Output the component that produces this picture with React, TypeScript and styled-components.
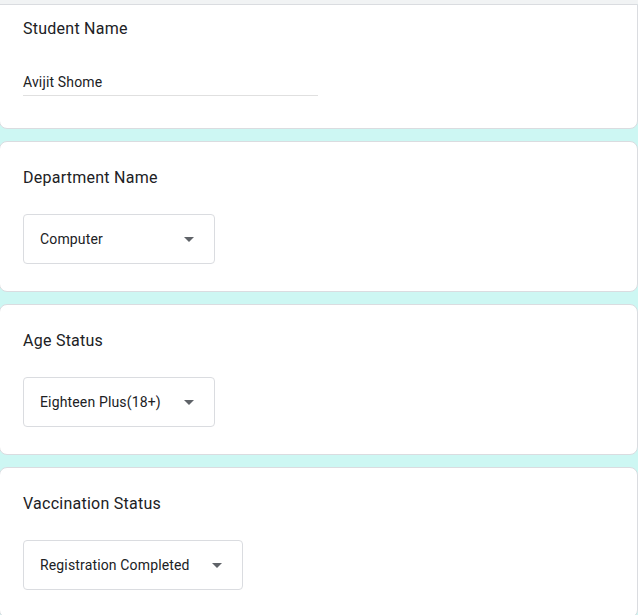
import React from "react";
import styled, { createGlobalStyle } from "styled-components";

const Global = createGlobalStyle`
  html, body { margin: 0; padding: 0; }
  body {
    background: #cdf7f3;
    font-family: Roboto, "Liberation Sans", Arial, sans-serif;
    color: #202124;
    overflow: hidden;
  }
`;

const Page = styled.div`
  width: 638px;
  min-height: 615px;
  background: #cdf7f3;
`;

const TopStrip = styled.div`
  height: 4px;
  background: #f1f3f4;
`;

const List = styled.div`
  display: flex;
  flex-direction: column;
  gap: 12px;
  margin-left: -1px;
`;

const Card = styled.section<{ $first?: boolean }>`
  box-sizing: border-box;
  width: 639px;
  background: #ffffff;
  border: 1px solid #dadce0;
  border-radius: ${(p) => (p.$first ? "0 0 8px 8px" : "8px")};
  padding: ${(p) => (p.$first ? "12px 24px 32px 23px" : "24px 24px 27px 23px")};
  display: flex;
  flex-direction: column;
  align-items: flex-start;
  gap: ${(p) => (p.$first ? "31px" : "24px")};
`;

const Title = styled.div`
  font-size: 16px;
  line-height: 24px;
  letter-spacing: 0.25px;
  color: #202124;
`;

const TextAnswer = styled.div`
  box-sizing: border-box;
  width: 295px;
  font-size: 14px;
  line-height: 20px;
  letter-spacing: 0.15px;
  padding-bottom: 3px;
  border-bottom: 1px solid #e0e0e0;
  color: #202124;
`;

const Select = styled.div`
  box-sizing: border-box;
  height: 50px;
  display: flex;
  align-items: center;
  padding: 0 20px 0 16px;
  border: 1px solid #dadce0;
  border-radius: 4px;
`;

const SelectText = styled.span`
  min-width: 122px;
  margin-right: 22px;
  font-size: 14px;
  line-height: 20px;
  letter-spacing: 0.15px;
  color: #202124;
  white-space: nowrap;
`;

const Arrow = styled.svg`
  width: 10px;
  height: 5px;
  display: block;
`;

function Dropdown({ value }: { value: string }) {
  return (
    <Select>
      <SelectText>{value}</SelectText>
      <Arrow viewBox="0 0 10 5">
        <path d="M0 0 L10 0 L5 5 Z" fill="#5f6368" />
      </Arrow>
    </Select>
  );
}

const questions = [
  { title: "Department Name", value: "Computer" },
  { title: "Age Status", value: "Eighteen Plus(18+)" },
  { title: "Vaccination Status", value: "Registration Completed" },
];

export default function App() {
  return (
    <Page>
      <Global />
      <TopStrip />
      <List>
        <Card $first>
          <Title>Student Name</Title>
          <TextAnswer>Avijit Shome</TextAnswer>
        </Card>
        {questions.map((q) => (
          <Card key={q.title}>
            <Title>{q.title}</Title>
            <Dropdown value={q.value} />
          </Card>
        ))}
      </List>
    </Page>
  );
}
